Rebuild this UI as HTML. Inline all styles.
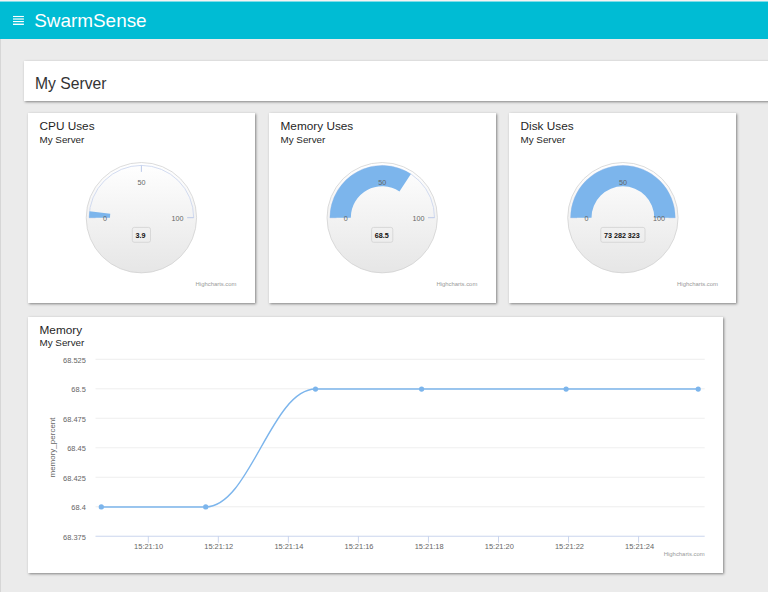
<!DOCTYPE html>
<html><head><meta charset="utf-8"><title>SwarmSense</title>
<style>
html,body{margin:0;padding:0;}
body{width:768px;height:592px;overflow:hidden;background:#ebebeb;font-family:"Liberation Sans",sans-serif;position:relative;}
.topstrip{position:absolute;left:0;top:0;width:768px;height:2px;background:linear-gradient(#f6f2f2 0,#f6f2f2 1.5px,#7fdde9 1.5px,#00bcd4 2px);}
.leftstrip{position:absolute;left:0;top:39px;width:1px;height:553px;background:#d6d6d6;}
.hdr{position:absolute;left:0;top:1px;width:768px;height:38px;background:#00bcd4;}
.brand{position:absolute;left:34.2px;top:9.8px;font-size:18.92px;line-height:22px;color:#fff;white-space:nowrap;}
.card{position:absolute;background:#fff;box-shadow:1px 1px 2.5px rgba(0,0,0,0.45);}
.t1{position:absolute;left:11.5px;top:5.8px;font-size:11.8px;line-height:14px;color:#1f1f1f;white-space:nowrap;}
.t2{position:absolute;left:11.5px;top:20.3px;font-size:9.84px;line-height:11px;color:#1f1f1f;white-space:nowrap;}
.h1{position:absolute;left:11px;top:13.5px;font-size:15.7px;line-height:18px;color:#333;white-space:nowrap;}
svg{position:absolute;left:0;top:0;}
.gl{font-size:7.2px;fill:#666;}
.dl{font-size:7.2px;font-weight:bold;fill:#111;}
.ax{font-size:7.45px;fill:#666;}
.cr{font-size:5.9px;fill:#999;}
</style></head><body>
<div class="hdr"></div>
<div class="topstrip"></div>
<div class="leftstrip"></div>
<div class="brand">SwarmSense</div>
<div class="card" style="left:24px;top:61px;width:760px;height:40px;"><div class="h1">My Server</div></div>

<div class="card" style="left:28px;top:113px;width:227px;height:190px;"><div class="t1">CPU Uses</div><div class="t2" style="top:20.8px">My Server</div></div>
<div class="card" style="left:269px;top:113px;width:227px;height:190px;"><div class="t1">Memory Uses</div><div class="t2" style="top:20.8px">My Server</div></div>
<div class="card" style="left:509px;top:113px;width:227px;height:190px;"><div class="t1">Disk Uses</div><div class="t2" style="top:20.8px">My Server</div></div>
<div class="card" style="left:28px;top:317px;width:695px;height:256px;"><div class="t1">Memory</div><div class="t2">My Server</div></div>
<svg width="768" height="592" viewBox="0 0 768 592" font-family="Liberation Sans, sans-serif">
<defs><linearGradient id="pg" x1="0" y1="0" x2="0" y2="1"><stop offset="0" stop-color="#ffffff"/><stop offset="1" stop-color="#e6e6e6"/></linearGradient></defs>
<rect x="13" y="15.95" width="10.9" height="1.10" fill="#ffffff"/>
<rect x="13" y="18.45" width="10.9" height="1.15" fill="#ffffff"/>
<rect x="13" y="21.00" width="10.9" height="1.12" fill="#ffffff"/>
<rect x="13" y="23.60" width="10.9" height="1.37" fill="#ffffff"/>
<circle cx="141.4" cy="217.7" r="55.18" fill="url(#pg)" stroke="#d0d0d0" stroke-width="0.75"/>
<path d="M 89.10000000000001 217.7 A 52.3 52.3 0 0 1 193.7 217.7" fill="none" stroke="#c4d0ec" stroke-width="0.75"/>
<path d="M 141.4 165.39999999999998 L 141.4 171.89999999999998 M 193.7 217.7 L 187.2 217.7 M 89.10000000000001 217.7 L 95.60000000000001 217.7" stroke="#b4c3e6" stroke-width="0.9" fill="none"/>
<path d="M 89.10 217.70 A 52.3 52.3 0 0 1 89.49 211.31 L 110.26 213.86 A 31.38 31.38 0 0 0 110.02 217.70 Z" fill="#7cb5ec"/>
<text x="141.4" y="184.50" text-anchor="middle" class="gl">50</text>
<text x="105.00" y="220.80" text-anchor="middle" class="gl">0</text>
<text x="177.60" y="220.80" text-anchor="middle" class="gl">100</text>
<rect x="132.30" y="227.40" width="18.2" height="14.9" rx="2" ry="2" fill="none" stroke="#cfcfcf" stroke-width="0.7"/>
<text x="135.40" y="237.80" class="dl">3.9</text>
<circle cx="382.2" cy="217.7" r="55.18" fill="url(#pg)" stroke="#d0d0d0" stroke-width="0.75"/>
<path d="M 329.9 217.7 A 52.3 52.3 0 0 1 434.5 217.7" fill="none" stroke="#c4d0ec" stroke-width="0.75"/>
<path d="M 382.2 165.39999999999998 L 382.2 171.89999999999998 M 434.5 217.7 L 428.0 217.7 M 329.9 217.7 L 336.4 217.7" stroke="#b4c3e6" stroke-width="0.9" fill="none"/>
<path d="M 329.90 217.70 A 52.3 52.3 0 0 1 410.91 173.99 L 399.43 191.47 A 31.38 31.38 0 0 0 350.82 217.70 Z" fill="#7cb5ec"/>
<text x="382.2" y="184.50" text-anchor="middle" class="gl">50</text>
<text x="345.80" y="220.80" text-anchor="middle" class="gl">0</text>
<text x="418.40" y="220.80" text-anchor="middle" class="gl">100</text>
<rect x="371.60" y="227.40" width="21.2" height="14.9" rx="2" ry="2" fill="none" stroke="#cfcfcf" stroke-width="0.7"/>
<text x="374.70" y="237.80" class="dl">68.5</text>
<circle cx="622.9" cy="217.7" r="55.18" fill="url(#pg)" stroke="#d0d0d0" stroke-width="0.75"/>
<path d="M 570.6 217.7 A 52.3 52.3 0 0 1 675.1999999999999 217.7" fill="none" stroke="#c4d0ec" stroke-width="0.75"/>
<path d="M 622.9 165.39999999999998 L 622.9 171.89999999999998 M 675.1999999999999 217.7 L 668.6999999999999 217.7 M 570.6 217.7 L 577.1 217.7" stroke="#b4c3e6" stroke-width="0.9" fill="none"/>
<path d="M 570.60 217.70 A 52.3 52.3 0 0 1 675.20 217.70 L 654.28 217.70 A 31.38 31.38 0 0 0 591.52 217.70 Z" fill="#7cb5ec"/>
<text x="622.9" y="184.50" text-anchor="middle" class="gl">50</text>
<text x="586.50" y="220.80" text-anchor="middle" class="gl">0</text>
<text x="659.10" y="220.80" text-anchor="middle" class="gl">100</text>
<rect x="600.80" y="227.40" width="44.2" height="14.9" rx="2" ry="2" fill="none" stroke="#cfcfcf" stroke-width="0.7"/>
<text x="603.90" y="237.80" class="dl">73 282 323</text>
<text x="236.50" y="285.8" text-anchor="end" class="cr">Highcharts.com</text>
<text x="477.30" y="285.8" text-anchor="end" class="cr">Highcharts.com</text>
<text x="718.00" y="285.8" text-anchor="end" class="cr">Highcharts.com</text>
<path d="M 95.5 359.30 L 704.7 359.30" stroke="#e6e6e6" stroke-width="0.7"/>
<path d="M 95.5 388.79 L 704.7 388.79" stroke="#e6e6e6" stroke-width="0.7"/>
<path d="M 95.5 418.28 L 704.7 418.28" stroke="#e6e6e6" stroke-width="0.7"/>
<path d="M 95.5 447.77 L 704.7 447.77" stroke="#e6e6e6" stroke-width="0.7"/>
<path d="M 95.5 477.26 L 704.7 477.26" stroke="#e6e6e6" stroke-width="0.7"/>
<path d="M 95.5 506.75 L 704.7 506.75" stroke="#e6e6e6" stroke-width="0.7"/>
<path d="M 95.5 536.24 L 704.7 536.24" stroke="#c0cdea" stroke-width="0.85"/>
<text x="85.8" y="362.60" text-anchor="end" class="ax">68.525</text>
<text x="85.8" y="392.09" text-anchor="end" class="ax">68.5</text>
<text x="85.8" y="421.58" text-anchor="end" class="ax">68.475</text>
<text x="85.8" y="451.07" text-anchor="end" class="ax">68.45</text>
<text x="85.8" y="480.56" text-anchor="end" class="ax">68.425</text>
<text x="85.8" y="510.05" text-anchor="end" class="ax">68.4</text>
<text x="85.8" y="539.54" text-anchor="end" class="ax">68.375</text>
<text transform="translate(55,447.5) rotate(-90)" text-anchor="middle" class="ax" style="font-size:8px">memory_percent</text>
<path d="M 148.30 536.24 L 148.30 542.74" stroke="#c0cdea" stroke-width="0.85"/>
<text x="148.60" y="548.8" text-anchor="middle" class="ax">15:21:10</text>
<path d="M 218.34 536.24 L 218.34 542.74" stroke="#c0cdea" stroke-width="0.85"/>
<text x="218.74" y="548.8" text-anchor="middle" class="ax">15:21:12</text>
<path d="M 288.38 536.24 L 288.38 542.74" stroke="#c0cdea" stroke-width="0.85"/>
<text x="288.88" y="548.8" text-anchor="middle" class="ax">15:21:14</text>
<path d="M 358.42 536.24 L 358.42 542.74" stroke="#c0cdea" stroke-width="0.85"/>
<text x="359.02" y="548.8" text-anchor="middle" class="ax">15:21:16</text>
<path d="M 428.46 536.24 L 428.46 542.74" stroke="#c0cdea" stroke-width="0.85"/>
<text x="429.16" y="548.8" text-anchor="middle" class="ax">15:21:18</text>
<path d="M 498.50 536.24 L 498.50 542.74" stroke="#c0cdea" stroke-width="0.85"/>
<text x="499.30" y="548.8" text-anchor="middle" class="ax">15:21:20</text>
<path d="M 568.54 536.24 L 568.54 542.74" stroke="#c0cdea" stroke-width="0.85"/>
<text x="569.44" y="548.8" text-anchor="middle" class="ax">15:21:22</text>
<path d="M 638.58 536.24 L 638.58 542.74" stroke="#c0cdea" stroke-width="0.85"/>
<text x="639.58" y="548.8" text-anchor="middle" class="ax">15:21:24</text>
<path d="M 101.3 506.95 L 205.7 506.95 C 249.62 506.95 271.58 389.09 315.5 389.09 L 421.6 389.09 L 566.1 389.09 L 698.2 389.09 " fill="none" stroke="#7cb5ec" stroke-width="1.45" stroke-linejoin="round" stroke-linecap="round"/>
<circle cx="101.3" cy="506.95" r="2.6" fill="#7cb5ec"/>
<circle cx="205.7" cy="506.95" r="2.6" fill="#7cb5ec"/>
<circle cx="315.5" cy="389.09" r="2.6" fill="#7cb5ec"/>
<circle cx="421.6" cy="389.09" r="2.6" fill="#7cb5ec"/>
<circle cx="566.1" cy="389.09" r="2.6" fill="#7cb5ec"/>
<circle cx="698.2" cy="389.09" r="2.6" fill="#7cb5ec"/>
<text x="704.7" y="556" text-anchor="end" class="cr">Highcharts.com</text>
</svg>
</body></html>
